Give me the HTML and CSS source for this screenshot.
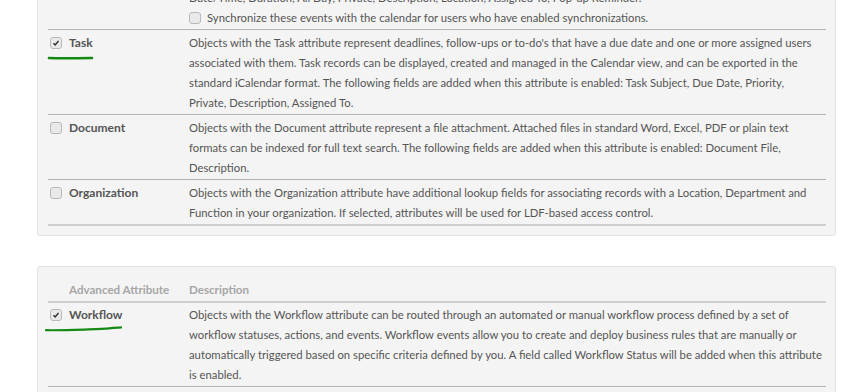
FILE: index.html
```html
<!DOCTYPE html>
<html lang="en">
<head>
  <meta charset="UTF-8">
  <meta name="viewport" content="width=device-width, initial-scale=1.0">
  <title>Object Attributes</title>
  <link rel="stylesheet" href="styles.css">
</head>
<body>
  <div class="page">
    <div class="panel panel-first">
      <table class="attr-table">
        <tbody>
          <tr>
            <td class="attr-name">
              <label class="attr-label"><span class="check is-checked"><svg viewBox="0 0 12 12"><path d="M3 6.2 L5 8.3 L9 3.6" /></svg></span>Event</label>
            </td>
            <td class="attr-desc">
              Objects with the Event attribute represent meetings, appointments or other scheduled activities.<br>
              Events can be displayed and managed in the Calendar view. The following fields are added: Event Subject, Start<br>
              Date/Time, Duration, All Day, Private, Description, Location, Assigned To, Pop-up Reminder.
              <div class="sync"><span class="check"></span>Synchronize these events with the calendar for users who have enabled synchronizations.</div>
            </td>
          </tr>
          <tr>
            <td class="attr-name">
              <label class="attr-label"><span class="check is-checked"><svg viewBox="0 0 12 12"><path d="M3 6.2 L5 8.3 L9 3.6" /></svg></span>Task
                <svg class="scribble scribble-task" viewBox="0 0 48 6"><path d="M1 3 C12 3.4 30 3.2 46 3" /></svg>
              </label>
            </td>
            <td class="attr-desc">Objects with the Task attribute represent deadlines, follow-ups or to-do's that have a due date and one or more assigned users associated with them. Task records can be displayed, created and managed in the Calendar view, and can be exported in the standard iCalendar format. The following fields are added when this attribute is enabled: Task Subject, Due Date, Priority, Private, Description, Assigned To.</td>
          </tr>
          <tr>
            <td class="attr-name">
              <label class="attr-label"><span class="check"></span>Document</label>
            </td>
            <td class="attr-desc">Objects with the Document attribute represent a file attachment. Attached files in standard Word, Excel, PDF or plain text formats can be indexed for full text search. The following fields are added when this attribute is enabled: Document File, Description.</td>
          </tr>
          <tr>
            <td class="attr-name">
              <label class="attr-label"><span class="check"></span>Organization</label>
            </td>
            <td class="attr-desc">Objects with the Organization attribute have additional lookup fields for associating records with a Location, Department and Function in your organization. If selected, attributes will be used for LDF-based access control.</td>
          </tr>
        </tbody>
      </table>
    </div>

    <div class="panel">
      <table class="attr-table">
        <thead>
          <tr>
            <th class="attr-name head-name">Advanced Attribute</th>
            <th class="attr-desc">Description</th>
          </tr>
        </thead>
        <tbody>
          <tr>
            <td class="attr-name">
              <label class="attr-label"><span class="check is-checked"><svg viewBox="0 0 12 12"><path d="M3 6.2 L5 8.3 L9 3.6" /></svg></span>Workflow
                <svg class="scribble scribble-workflow" viewBox="0 0 80 8"><path d="M1 5.2 C14 5.4 28 5 40 4.6 C52 4.2 60 4 66 3.4 C70 3 74 2.6 78 2.4" /></svg>
              </label>
            </td>
            <td class="attr-desc">Objects with the Workflow attribute can be routed through an automated or manual workflow process defined by a set of workflow statuses, actions, and events. Workflow events allow you to create and deploy business rules that are manually or automatically triggered based on specific criteria defined by you. A field called Workflow Status will be added when this attribute is enabled.</td>
          </tr>
          <tr>
            <td class="attr-name">
              <label class="attr-label"><span class="check"></span>Approval</label>
            </td>
            <td class="attr-desc">Objects with the Approval attribute can be submitted for review and sign-off.</td>
          </tr>
        </tbody>
      </table>
    </div>
  </div>
</body>
</html>
```

FILE: styles.css
```css
body {
  margin: 0;
  padding: 0;
  background-color: #fff;
  font-family: Lato, "Open Sans", Arial, sans-serif;
  font-size: 11.3px;
  color: #555;
}
.page {
  padding: 0 7px 0 37px;
}
.panel {
  width: 778px;
  padding: 10px 9px 9px 10px;
  background-color: #f4f4f4;
  border: 1px solid #e2e2e2;
  border-radius: 3px;
  margin-bottom: 30px;
}
.panel-first {
  margin-top: -66px;
}
.attr-table {
  width: 100%;
  border-collapse: collapse;
}
.attr-table td, .attr-table th {
  padding: 3px 4px 1px 0;
  line-height: 20px;
  vertical-align: top;
  text-align: left;
}
.attr-table tbody tr {
  border-top: 1px solid #b3b3b3;
}
.attr-table tbody tr:first-child {
  border-top: none;
}
.panel-first .attr-table {
  border-bottom: 2px solid #cfcfcf;
}
.attr-table thead tr {
  border-bottom: 2px solid #cfcfcf;
}
.attr-table th {
  padding-top: 3px;
  padding-bottom: 1px;
  font-size: 11.6px;
  font-weight: 700;
  color: #a6a6a6;
}
.attr-table thead + tbody tr:first-child td {
  padding-top: 2px;
}
.attr-name {
  width: 137px;
}
.head-name {
  width: 116px;
  padding-left: 21px !important;
}
.attr-label {
  position: relative;
  display: flex;
  align-items: center;
  gap: 7px;
  padding-left: 2px;
  font-size: 12px;
  font-weight: 700;
  color: #555;
}
.check {
  display: inline-flex;
  align-items: center;
  justify-content: center;
  width: 12px;
  height: 12px;
  box-sizing: border-box;
  border: 1px solid #b9b9b9;
  border-radius: 3px;
  background-color: #e9e9e9;
  flex-shrink: 0;
}
.check svg {
  width: 10px;
  height: 10px;
}
.check svg path {
  fill: none;
  stroke: #333;
  stroke-width: 1.8;
}
.sync {
  display: flex;
  align-items: center;
  gap: 6px;
}
.scribble {
  position: absolute;
  overflow: visible;
}
.scribble path {
  fill: none;
  stroke: #138a13;
  stroke-linecap: round;
}
.scribble-task {
  left: 0;
  top: 22px;
  width: 46px;
  height: 6px;
}
.scribble-task path {
  stroke-width: 2.6;
}
.scribble-workflow {
  left: -3px;
  top: 20px;
  width: 78px;
  height: 8px;
}
.scribble-workflow path {
  stroke-width: 2.2;
}
```
